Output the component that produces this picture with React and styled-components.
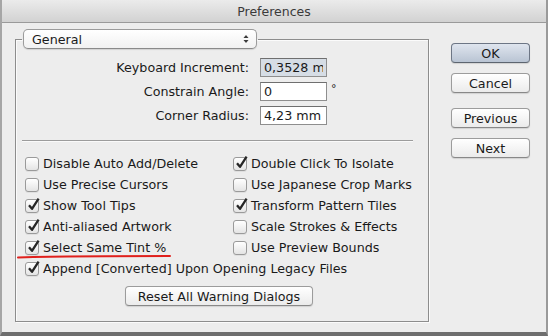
import React from 'react'
import styled, { createGlobalStyle } from 'styled-components'

const leftOptions = [
    { label: 'Disable Auto Add/Delete', checked: false },
    { label: 'Use Precise Cursors', checked: false },
    { label: 'Show Tool Tips', checked: true },
    { label: 'Anti-aliased Artwork', checked: true },
    { label: 'Select Same Tint %', checked: true },
]

const rightOptions = [
    { label: 'Double Click To Isolate', checked: true },
    { label: 'Use Japanese Crop Marks', checked: false },
    { label: 'Transform Pattern Tiles', checked: true },
    { label: 'Scale Strokes & Effects', checked: false },
    { label: 'Use Preview Bounds', checked: false },
]

const fields = [
    { label: 'Keyboard Increment:', value: '0,3528 mm', selected: true },
    { label: 'Constrain Angle:', value: '0', unit: '°' },
    { label: 'Corner Radius:', value: '4,23 mm' },
]

function Check({ label, checked, wide }) {
    return (
        <Option $wide={wide}>
            <Box>
                {checked && (
                    <Tick viewBox="0 0 14 14">
                        <path d="M3 7.2 L6 10.8 L12.6 0.6" />
                    </Tick>
                )}
            </Box>
            <span>{label}</span>
        </Option>
    )
}

export default function App() {
    const rows = leftOptions.map((item, i) => [item, rightOptions[i]])

    return (
        <>
            <GlobalStyle />
            <Window>
                <TitleBar>Preferences</TitleBar>
                <Content>
                    <Group>
                        <Legend>
                            <Popup>
                                <span>General</span>
                                <Arrows viewBox="0 0 6 10">
                                    <path d="M0.5 4 L3 1 L5.5 4 Z" />
                                    <path d="M0.5 6 L3 9 L5.5 6 Z" />
                                </Arrows>
                            </Popup>
                        </Legend>
                        <Fields>
                            {fields.map((f) => (
                                <React.Fragment key={f.label}>
                                    <Label>{f.label}</Label>
                                    <FieldCell>
                                        <Input $selected={f.selected} value={f.value} readOnly />
                                        {f.unit && <Unit>{f.unit}</Unit>}
                                    </FieldCell>
                                </React.Fragment>
                            ))}
                        </Fields>
                        <Separator />
                        <Options>
                            {rows.map(([l, r]) => (
                                <React.Fragment key={l.label}>
                                    <Check {...l} />
                                    <Check {...r} />
                                </React.Fragment>
                            ))}
                            <Check wide label="Append [Converted] Upon Opening Legacy Files" checked />
                        </Options>
                        <ResetRow>
                            <Button $width={188}>Reset All Warning Dialogs</Button>
                        </ResetRow>
                    </Group>
                    <Side>
                        <Button $primary>OK</Button>
                        <Button>Cancel</Button>
                        <Button $gap={15}>Previous</Button>
                        <Button>Next</Button>
                    </Side>
                </Content>
                <Underline viewBox="0 0 160 6">
                    <path d="M1 4.4 Q60 3 153 3" />
                </Underline>
            </Window>
        </>
    )
}

const GlobalStyle = createGlobalStyle`
    html, body {
        margin: 0;
        padding: 0;
        background: #ececec;
    }
    body {
        font-family: "DejaVu Sans", "Liberation Sans", sans-serif;
        color: #1a1a1a;
    }
`
const Window = styled.div`
    position: relative;
    width: 548px;
    height: 336px;
    box-sizing: border-box;
    display: flex;
    flex-direction: column;
    background: #ededed;
    border-left: 2px solid #a6a6a6;
    border-right: 2px solid #9a9a9a;
    border-bottom: 4px solid #6e6e6e;
    overflow: hidden;
`
const TitleBar = styled.div`
    height: 23px;
    flex: none;
    border-bottom: 1px solid #9a9a9a;
    background: linear-gradient(#ebebeb, #d2d2d2);
    display: flex;
    align-items: center;
    justify-content: center;
    font-size: 12.5px;
    color: #3a3a3a;
    padding-top: 1px;
    box-sizing: border-box;
`
const Content = styled.div`
    display: flex;
    align-items: flex-start;
    padding: 6px 0 0 13px;
    gap: 22px;
`
const Group = styled.fieldset`
    margin: 0;
    padding: 0 0 15px;
    width: 414px;
    height: 293px;
    box-sizing: border-box;
    border: 1px solid #8d8d8d;
    box-shadow: 1px 1px 0 #fbfbfb, inset 1px 1px 0 #fbfbfb;
    min-width: 0;
`
const Legend = styled.legend`
    margin-left: 6px;
    padding: 0 1px;
`
const Popup = styled.div`
    width: 234px;
    height: 20px;
    box-sizing: border-box;
    display: flex;
    align-items: center;
    justify-content: space-between;
    padding: 0 7px 0 8px;
    border: 1px solid #9b9b9b;
    border-bottom-color: #8a8a8a;
    border-radius: 5px;
    background: linear-gradient(#ffffff, #f1f1f1);
    box-shadow: 0 1px 1px rgba(0,0,0,0.12);
    font-size: 12.7px;
`
const Arrows = styled.svg`
    width: 6px;
    height: 10px;
    fill: #3a3a3a;
`
const Fields = styled.div`
    display: grid;
    grid-template-columns: 233px auto;
    column-gap: 11px;
    row-gap: 5px;
    align-items: center;
    padding-top: 9px;
`
const Label = styled.div`
    text-align: right;
    font-size: 12.7px;
`
const FieldCell = styled.div`
    display: flex;
    align-items: flex-start;
    gap: 4px;
`
const Input = styled.input`
    width: 67px;
    height: 19px;
    box-sizing: border-box;
    margin: 0;
    padding: 0 3px;
    border: 1px solid #8e8e8e;
    border-top-color: #6f6f6f;
    background: ${(p) => (p.$selected ? '#d6dde5' : '#ffffff')};
    font-family: "DejaVu Sans", "Liberation Sans", sans-serif;
    font-size: 12.7px;
    color: #1a1a1a;
    outline: none;
`
const Unit = styled.span`
    font-size: 11px;
    line-height: 14px;
`
const Separator = styled.div`
    height: 1px;
    margin: 15px 15px 0 6px;
    background: #9c9c9c;
    box-shadow: 0 1px 0 #fafafa;
`
const Options = styled.div`
    display: grid;
    grid-template-columns: 208px auto;
    grid-auto-rows: 21px;
    padding: 12px 0 0 9px;
`
const Option = styled.div`
    display: flex;
    align-items: center;
    gap: 4px;
    font-size: 12.7px;
    white-space: nowrap;
    grid-column: ${(p) => (p.$wide ? '1 / -1' : 'auto')};
`
const Box = styled.div`
    position: relative;
    width: 14px;
    height: 14px;
    box-sizing: border-box;
    flex: none;
    border: 1px solid #9a9a9a;
    border-radius: 3px;
    background: linear-gradient(#ffffff, #e4e4e4);
    box-shadow: 0 1px 0 rgba(0,0,0,0.06);
`
const Tick = styled.svg`
    position: absolute;
    left: 0;
    top: -2px;
    width: 14px;
    height: 14px;
    overflow: visible;
    fill: none;
    stroke: #262626;
    stroke-width: 2.3;
    stroke-linejoin: round;
`
const ResetRow = styled.div`
    display: flex;
    padding: 7px 0 0 109px;
`
const Side = styled.div`
    display: flex;
    flex-direction: column;
    padding-top: 14px;
    gap: 10px;
`
const Button = styled.div`
    width: ${(p) => p.$width || 79}px;
    height: 20px;
    box-sizing: border-box;
    margin-top: ${(p) => (p.$gap ? p.$gap - 10 : 0)}px;
    display: flex;
    align-items: center;
    justify-content: center;
    border: 1px solid ${(p) => (p.$primary ? '#6d7685' : '#9c9c9c')};
    border-bottom-color: ${(p) => (p.$primary ? '#5d6570' : '#888')};
    border-radius: 4px;
    background: ${(p) => (p.$primary
        ? 'linear-gradient(#dfe5ee, #b9c4d3)'
        : 'linear-gradient(#ffffff, #ebebeb)')};
    box-shadow: 0 1px 1px rgba(0,0,0,0.12);
    font-size: 12.7px;
    color: #1a1a1a;
`
const Underline = styled.svg`
    position: absolute;
    left: 15px;
    top: 253px;
    width: 160px;
    height: 6px;
    overflow: visible;
    fill: none;
    stroke: #e0201c;
    stroke-width: 2;
    stroke-linecap: round;
`
